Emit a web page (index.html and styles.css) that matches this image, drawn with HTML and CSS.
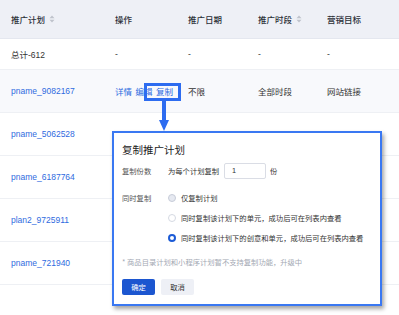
FILE: index.html
```html
<!DOCTYPE html>
<html lang="zh-CN">

<head>
    <meta charset="UTF-8" />
    <title>推广计划</title>
    <link rel="stylesheet" href="styles.css">
</head>

<body>
    <div class="table">
        <div class="row head">
            <div class="cell">推广计划
                <svg class="sort" width="6" height="8" viewBox="0 0 6 8"><path d="M3 0.5L5.5 3.2H0.5Z M3 7.5L5.5 4.8H0.5Z" fill="#bfc3cc"/></svg>
            </div>
            <div class="cell">操作</div>
            <div class="cell">推广日期</div>
            <div class="cell">推广时段
                <svg class="sort" width="6" height="8" viewBox="0 0 6 8"><path d="M3 0.5L5.5 3.2H0.5Z M3 7.5L5.5 4.8H0.5Z" fill="#bfc3cc"/></svg>
            </div>
            <div class="cell">营销目标</div>
        </div>
        <div class="row total">
            <div class="cell">总计-612</div>
            <div class="cell">-</div>
            <div class="cell">-</div>
            <div class="cell">-</div>
            <div class="cell">-</div>
        </div>
        <div class="row hover">
            <div class="cell link">pname_9082167</div>
            <div class="cell ops"><span>详情</span><span>编辑</span><span>复制</span></div>
            <div class="cell">不限</div>
            <div class="cell">全部时段</div>
            <div class="cell">网站链接</div>
        </div>
        <div class="row">
            <div class="cell link">pname_5062528</div>
        </div>
        <div class="row">
            <div class="cell link">pname_6187764</div>
        </div>
        <div class="row">
            <div class="cell link">plan2_9725911</div>
        </div>
        <div class="row">
            <div class="cell link">pname_721940</div>
        </div>
    </div>

    <!-- annotation: highlight + arrow -->
    <div class="mark"></div>
    <div class="arrow-line"></div>
    <div class="arrow-head"></div>

    <div class="dialog">
        <div class="dialog-title">复制推广计划</div>
        <div class="form-row">
            <div class="label">复制份数</div>
            <div class="field">
                为每个计划复制
                <div class="input">1</div>
                份
            </div>
        </div>
        <div class="form-row radios-row">
            <div class="label">同时复制</div>
            <div class="radios">
                <div class="radio"><span class="dot hovered"></span>仅复制计划</div>
                <div class="radio"><span class="dot"></span>同时复制该计划下的单元，成功后可在列表内查看</div>
                <div class="radio"><span class="dot checked"></span>同时复制该计划下的创意和单元，成功后可在列表内查看</div>
            </div>
        </div>
        <div class="note">* 商品目录计划和小程序计划暂不支持复制功能，升级中</div>
        <div class="buttons">
            <button class="btn primary">确定</button>
            <button class="btn">取消</button>
        </div>
    </div>
</body>

</html>
```

FILE: styles.css
```css
* {
    box-sizing: border-box;
    margin: 0;
    padding: 0;
}

body {
    font-family: "Liberation Sans", "Noto Sans CJK SC", sans-serif;
    background: #ffffff;
    width: 399px;
    height: 315px;
    overflow: hidden;
    position: relative;
    color: #333;
}

/* Table */
.row {
    display: grid;
    grid-template-columns: 104px 73px 70px 69px 1fr;
    align-items: center;
    padding-left: 11px;
    height: 43px;
    border-bottom: 1px solid #eef0f4;
    font-size: 8.5px;
}

.row.head {
    height: 39px;
    background: #eef0f6;
    font-weight: 500;
    color: #2b2f36;
    border-bottom: 1px solid #e4e7ef;
}

.row.total {
    height: 31px;
}

.row.hover {
    background: #f8f9fc;
}

.cell {
    display: flex;
    align-items: center;
    white-space: nowrap;
}

.sort {
    margin-left: 4px;
}

.link {
    color: #2f6be0;
}

.ops {
    gap: 3.5px;
    color: #2f6be0;
}

/* Annotation */
.mark {
    position: absolute;
    left: 144px;
    top: 83px;
    width: 37px;
    height: 18px;
    border: 3px solid #2d6cf0;
}

.arrow-line {
    position: absolute;
    left: 162px;
    top: 101px;
    width: 4px;
    height: 20px;
    background: #2d6cf0;
}

.arrow-head {
    position: absolute;
    left: 158.5px;
    top: 120px;
    width: 0;
    height: 0;
    border-left: 5.5px solid transparent;
    border-right: 5.5px solid transparent;
    border-top: 11px solid #2d6cf0;
}

/* Dialog */
.dialog {
    position: absolute;
    left: 112px;
    top: 131px;
    width: 270px;
    height: 175px;
    background: #fff;
    border: 2px solid #3a78f2;
    box-shadow: 2px 3px 4px rgba(0, 0, 0, 0.35);
    padding: 10px 8px 9px;
    font-family: "Noto Sans CJK SC", sans-serif;
    font-size: 7.3px;
    color: #333;
}

.dialog-title {
    font-size: 10.5px;
    line-height: 14px;
    color: #222;
}

.form-row {
    display: flex;
    align-items: center;
    margin-top: 6px;
}

.label {
    width: 46px;
    color: #555;
    flex-shrink: 0;
}

.field {
    display: flex;
    align-items: center;
    gap: 4px;
    height: 16px;
}

.input {
    width: 42px;
    height: 16px;
    border: 1px solid #dadde5;
    border-radius: 2px;
    padding-left: 7px;
    line-height: 14px;
    margin-left: 1px;
    font-family: "Liberation Sans", sans-serif;
}

.radios-row {
    align-items: flex-start;
    margin-top: 9px;
}

.radios-row .label {
    line-height: 20px;
}

.radio {
    display: flex;
    align-items: center;
    height: 20px;
    white-space: nowrap;
}

.dot {
    width: 8px;
    height: 8px;
    border-radius: 50%;
    border: 1px solid #d5d9e2;
    background: #fff;
    margin-right: 5px;
    flex-shrink: 0;
}

.dot.hovered {
    background: #e6e9f1;
    border-color: #c7ccd8;
}

.dot.checked {
    border: 2.5px solid #1c5bd6;
    background: #fff;
}

.note {
    margin-top: 8px;
    line-height: 12px;
    color: #a3a8b3;
}

.buttons {
    display: flex;
    gap: 6px;
    margin-top: 11px;
}

.btn {
    width: 33px;
    height: 16px;
    border: none;
    border-radius: 2px;
    font-family: "Noto Sans CJK SC", sans-serif;
    font-size: 7.3px;
    background: #eef0f6;
    color: #333;
}

.btn.primary {
    background: #1c56d0;
    color: #fff;
}
```
